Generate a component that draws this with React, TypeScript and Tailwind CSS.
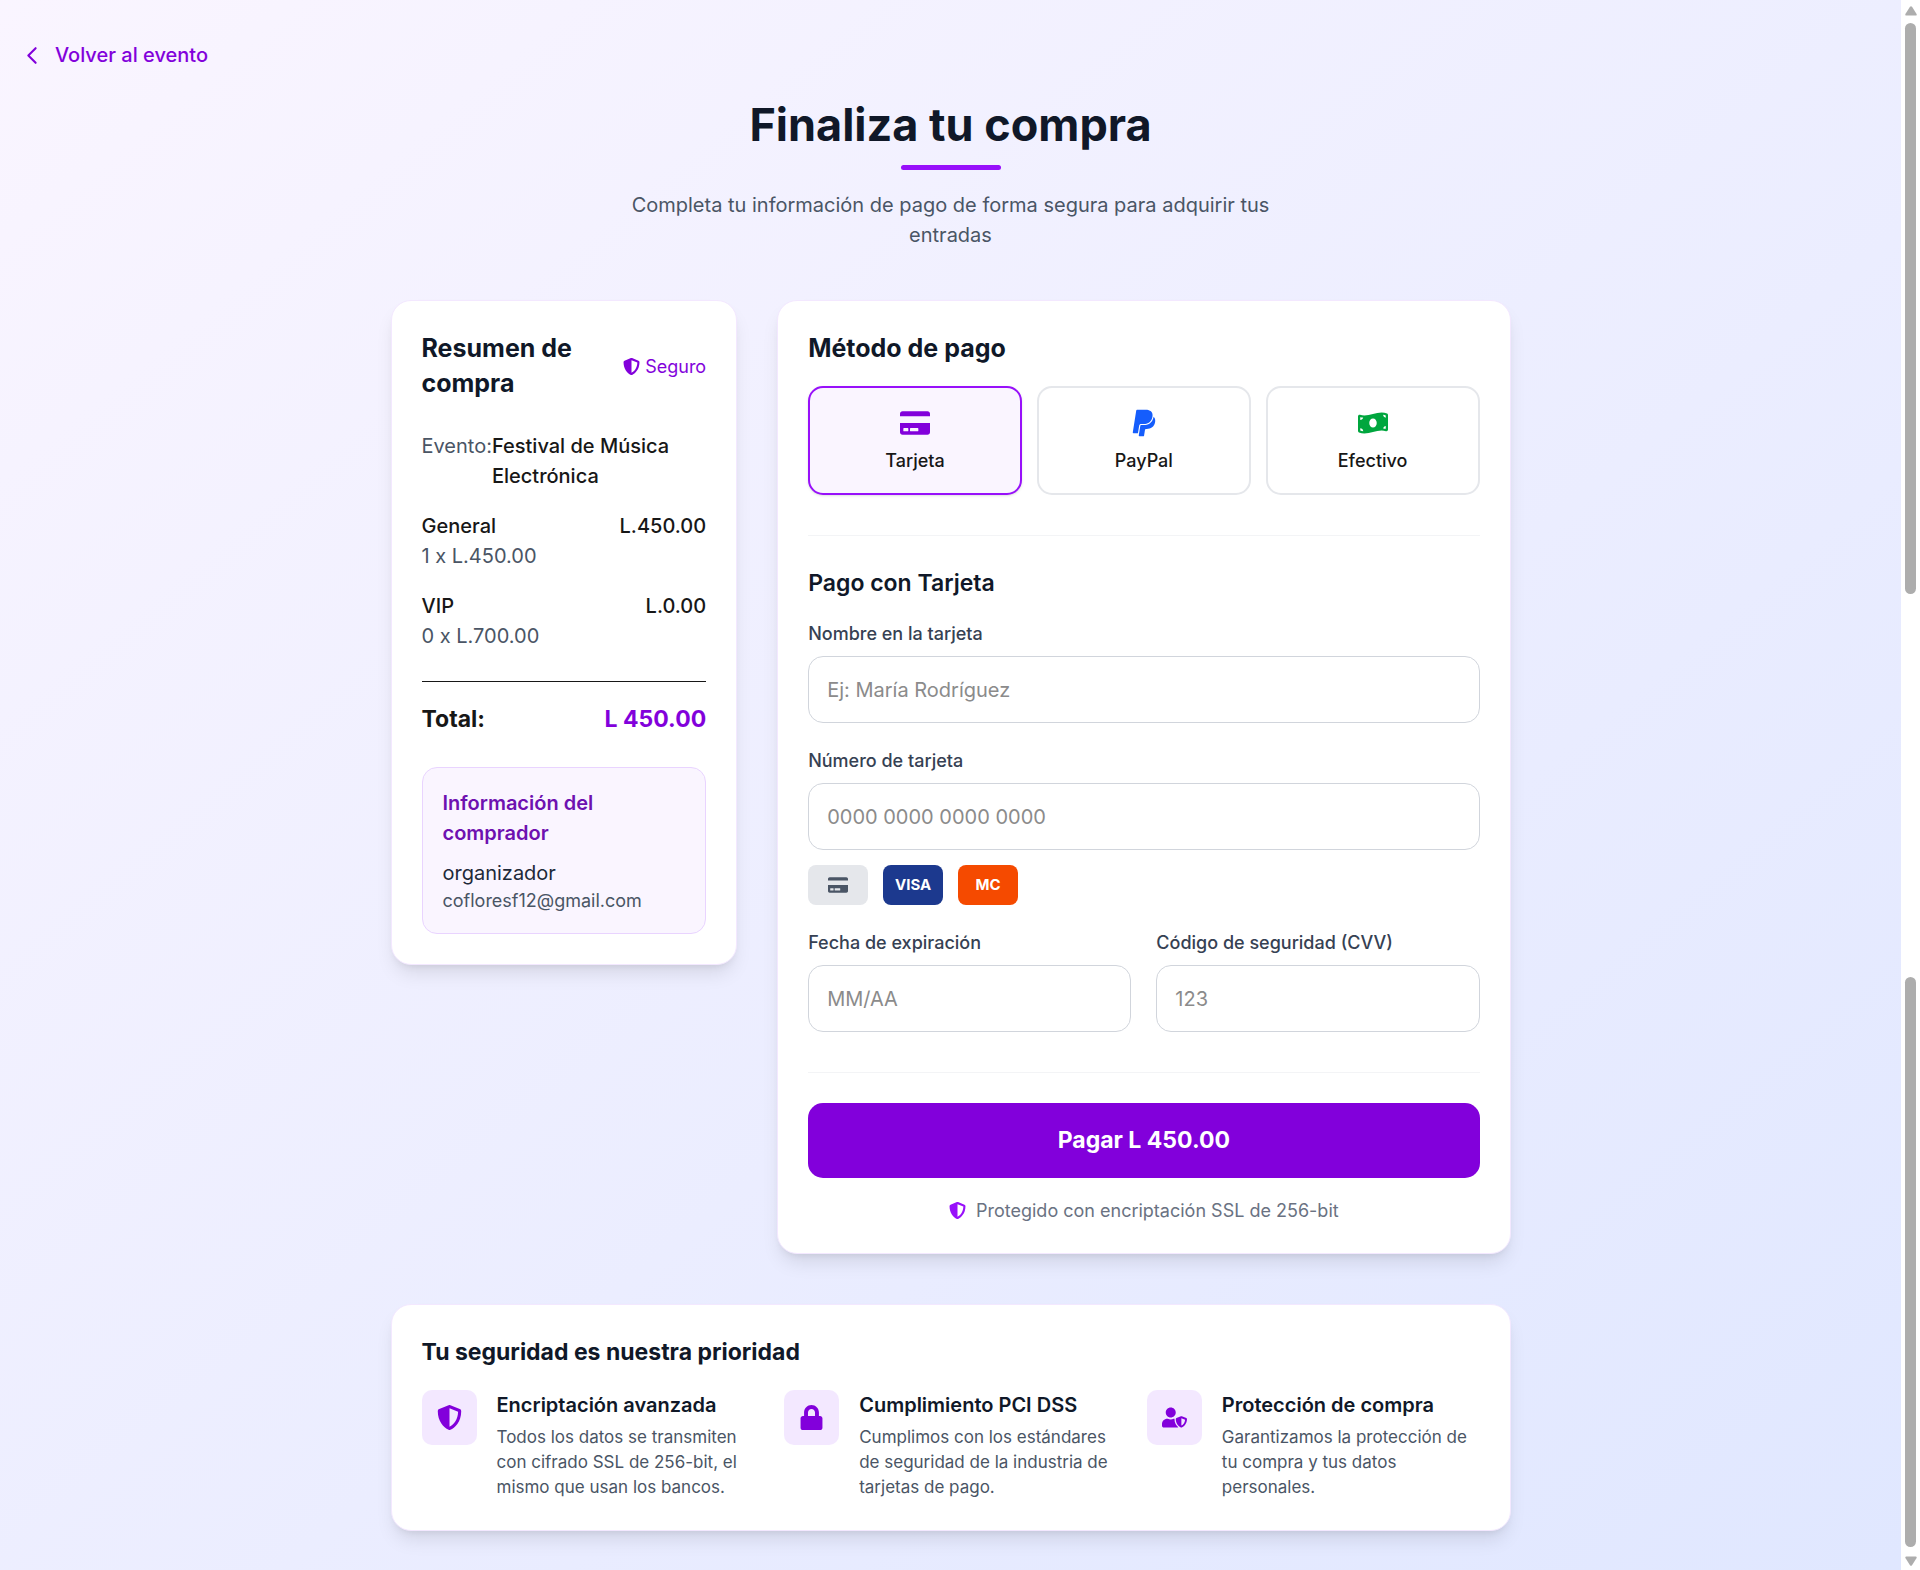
import type { ReactNode } from "react";
import {
  FaCreditCard,
  FaLock,
  FaMoneyBillWave,
  FaPaypal,
  FaShieldAlt,
  FaUserShield,
} from "react-icons/fa";

const card =
  "rounded-[20px] border border-purple-100 bg-white p-[30px] shadow-[0_12px_19px_-4px_rgb(0_0_0/0.1),0_5px_8px_-5px_rgb(0_0_0/0.1)]";

function Header() {
  return (
    <header className="flex flex-col items-center text-center">
      <h1 className="text-[45px] leading-[50px] font-bold text-gray-900">Finaliza tu compra</h1>
      <div className="mt-[15px] h-[5px] w-[100px] rounded-full bg-purple-600" />
      <p className="mt-5 max-w-[700px] text-gray-600">
        Completa tu información de pago de forma segura para adquirir tus entradas
      </p>
    </header>
  );
}

const tickets = [
  { name: "General", detail: "1 x L.450.00", amount: "L.450.00" },
  { name: "VIP", detail: "0 x L.700.00", amount: "L.0.00" },
];

function Summary() {
  return (
    <section className={card}>
      <div className="flex items-center justify-between">
        <h2 className="text-[25px] leading-[35px] font-bold text-gray-900">Resumen de compra</h2>
        <div className="flex items-center gap-[5px] text-[18px] leading-[25px] text-purple-700">
          <FaShieldAlt className="size-[17px]" aria-hidden="true" />
          <span>Seguro</span>
        </div>
      </div>
      <div className="mt-[30px] flex flex-col gap-5">
        <div className="flex justify-between">
          <span className="text-gray-600">Evento:</span>
          <span className="font-medium">Festival de Música Electrónica</span>
        </div>
        {tickets.map((t) => (
          <div key={t.name} className="flex justify-between">
            <div>
              <p className="font-medium">{t.name}</p>
              <p className="text-gray-600">{t.detail}</p>
            </div>
            <span className="font-medium">{t.amount}</span>
          </div>
        ))}
      </div>
      <div className="mt-[30px] flex justify-between border-t border-neutral-900 pt-5 text-[23px] leading-[35px] font-bold">
        <span>Total:</span>
        <span className="text-purple-700">L 450.00</span>
      </div>
      <div className="mt-[30px] rounded-[15px] border border-purple-200 bg-purple-50 p-5">
        <h3 className="font-semibold text-purple-800">Información del comprador</h3>
        <p className="mt-[10px] text-gray-800">organizador</p>
        <p className="text-[18px] leading-[25px] text-gray-600">cofloresf12@gmail.com</p>
      </div>
    </section>
  );
}

function Method({ label, icon, active = false }: { label: string; icon: ReactNode; active?: boolean }) {
  return (
    <button
      type="button"
      aria-pressed={active}
      className={
        "flex flex-col items-center gap-[10px] rounded-[15px] border-2 p-5 text-[18px] leading-[25px] font-medium " +
        (active ? "border-purple-600 bg-purple-50 shadow-sm" : "border-gray-200 bg-white")
      }
    >
      {icon}
      {label}
    </button>
  );
}

function Field({ id, label, placeholder }: { id: string; label: string; placeholder: string }) {
  return (
    <div>
      <label htmlFor={id} className="block text-[18px] leading-[25px] font-medium text-gray-700">
        {label}
      </label>
      <input
        id={id}
        type="text"
        placeholder={placeholder}
        className="mt-[10px] block h-[67px] w-full rounded-[15px] border border-gray-300 bg-white px-[18px] placeholder:text-[#8b8b8b]"
      />
    </div>
  );
}

function Payment() {
  return (
    <section className={card + " col-span-2"}>
      <h2 className="text-[25px] leading-[35px] font-bold text-gray-900">Método de pago</h2>
      <div className="mt-5 grid grid-cols-3 gap-[15px]">
        <Method active label="Tarjeta" icon={<FaCreditCard className="size-[30px] text-purple-700" />} />
        <Method label="PayPal" icon={<FaPaypal className="size-[30px] text-blue-600" />} />
        <Method label="Efectivo" icon={<FaMoneyBillWave className="size-[30px] text-green-600" />} />
      </div>
      <form className="mt-10 border-t border-gray-100 pt-[30px]">
        <h3 className="text-[23px] leading-[35px] font-semibold text-gray-900">Pago con Tarjeta</h3>
        <div className="mt-5 flex flex-col gap-[25px]">
          <Field id="nombre" label="Nombre en la tarjeta" placeholder="Ej: María Rodríguez" />
          <div>
            <Field id="numero" label="Número de tarjeta" placeholder="0000 0000 0000 0000" />
            <div className="mt-[15px] flex gap-[15px] text-[15px] leading-5 font-bold text-white">
              <div className="flex h-10 w-[60px] items-center justify-center rounded-lg bg-gray-200">
                <FaCreditCard className="size-5 text-gray-600" aria-hidden="true" />
              </div>
              <div className="flex h-10 w-[60px] items-center justify-center rounded-lg bg-blue-900">VISA</div>
              <div className="flex h-10 w-[60px] items-center justify-center rounded-lg bg-[#f54a00]">MC</div>
            </div>
          </div>
          <div className="grid grid-cols-2 gap-[25px]">
            <Field id="expiracion" label="Fecha de expiración" placeholder="MM/AA" />
            <Field id="cvv" label="Código de seguridad (CVV)" placeholder="123" />
          </div>
        </div>
        <div className="mt-10 border-t border-gray-100 pt-[30px]">
          <button
            type="button"
            className="w-full rounded-[15px] bg-purple-700 py-5 text-[23px] leading-[35px] font-bold text-white"
          >
            Pagar L 450.00
          </button>
          <p className="mt-5 flex items-center justify-center gap-[10px] text-[18px] leading-[25px] text-gray-500">
            <FaShieldAlt className="size-[17px] text-purple-600" aria-hidden="true" />
            Protegido con encriptación SSL de 256-bit
          </p>
        </div>
      </form>
    </section>
  );
}

const features = [
  {
    Icon: FaShieldAlt,
    title: "Encriptación avanzada",
    text: "Todos los datos se transmiten con cifrado SSL de 256-bit, el mismo que usan los bancos.",
  },
  {
    Icon: FaLock,
    title: "Cumplimiento PCI DSS",
    text: "Cumplimos con los estándares de seguridad de la industria de tarjetas de pago.",
  },
  {
    Icon: FaUserShield,
    title: "Protección de compra",
    text: "Garantizamos la protección de tu compra y tus datos personales.",
  },
];

function Security() {
  return (
    <section className={card}>
      <h2 className="text-[23px] leading-[35px] font-bold text-gray-900">Tu seguridad es nuestra prioridad</h2>
      <div className="mt-5 grid grid-cols-3 gap-[30px]">
        {features.map(({ Icon, title, text }) => (
          <div key={title} className="flex items-start gap-5">
            <div className="shrink-0 rounded-[10px] bg-purple-100 p-[15px]">
              <Icon className="size-[25px] text-purple-700" aria-hidden="true" />
            </div>
            <div>
              <h3 className="font-semibold text-gray-900">{title}</h3>
              <p className="mt-[5px] text-[17px] leading-[25px] text-gray-600">{text}</p>
            </div>
          </div>
        ))}
      </div>
    </section>
  );
}

function ScrollRail() {
  return (
    <div aria-hidden="true" className="flex w-[19px] shrink-0 flex-col items-center bg-white py-1">
      <svg viewBox="0 0 12 10" className="mt-[2px] h-[10px] w-3 shrink-0 fill-[#adadad]">
        <path d="M5 .8Q6 -.4 7 .8L11.6 8Q12 9.6 10.600 9.600H1.400Q0 9.600 .4 8Z" />
      </svg>
      <div className="mt-[7px] w-[11px] grow rounded-full bg-[#adadad]" />
      <div className="h-[383px]" />
      <div className="w-[11px] grow rounded-full bg-[#adadad]" />
      <svg viewBox="0 0 12 10" className="mt-[9px] h-[10px] w-3 shrink-0 fill-[#adadad]">
        <path d="M5 9.200Q6 10.400 7 9.200L11.600 2Q12 .4 10.600 .4H1.400Q0 .4 .4 2Z" />
      </svg>
    </div>
  );
}

export default function App() {
  return (
    <div className="flex min-h-screen font-['Inter',sans-serif] text-[20px] leading-[30px] text-neutral-900">
      <main className="grow bg-linear-to-br from-purple-50 to-indigo-100 px-5 pt-10 pb-[35px]">
        <a href="#evento" className="flex w-fit items-center gap-[10px] font-medium text-purple-700">
          <svg viewBox="0 0 24 24" fill="none" stroke="currentColor" strokeWidth="2" strokeLinecap="round" strokeLinejoin="round" className="size-[25px]">
            <path d="M15 19l-7-7 7-7" />
          </svg>
          Volver al evento
        </a>
        <div className="mx-auto mt-[30px] max-w-[1120px]">
          <Header />
          <div className="mt-[50px] grid grid-cols-3 items-start gap-10">
            <Summary />
            <Payment />
          </div>
          <div className="mt-[50px]">
            <Security />
          </div>
        </div>
      </main>
      <ScrollRail />
    </div>
  );
}
